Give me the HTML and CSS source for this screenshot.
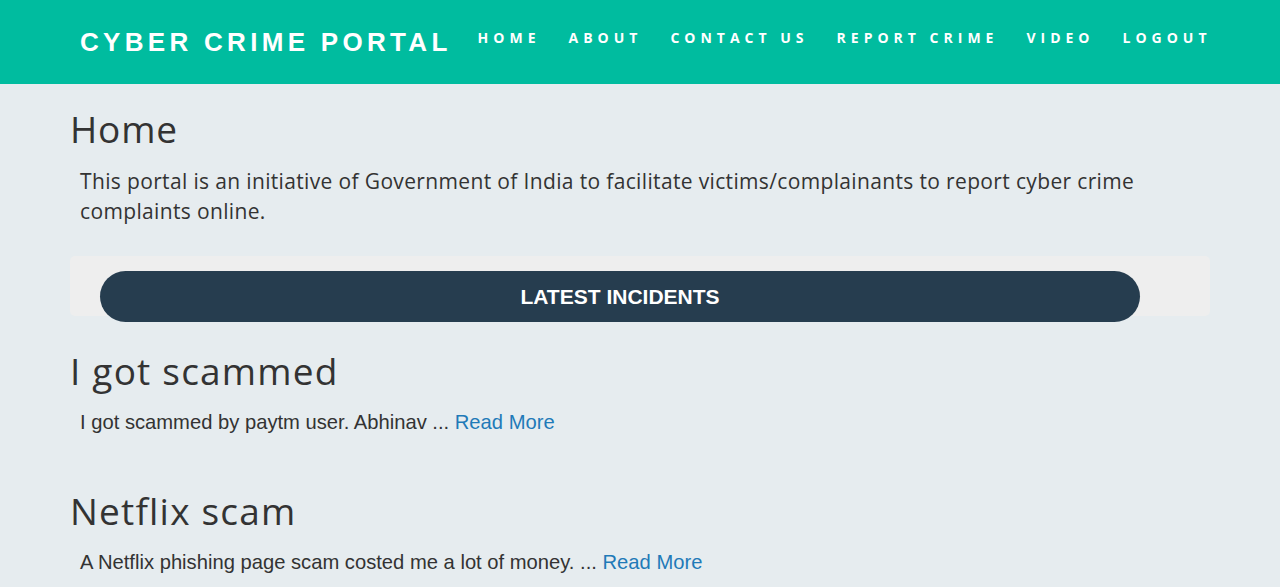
FILE: index.html
```html
<!DOCTYPE html>
<html>
<head>
<meta charset="utf-8">
<link rel="stylesheet" href="styles.css">
</head>
<body>
<header class="navbar">
  <div class="brand">CYBER CRIME PORTAL</div>
  <nav class="menu">
    <a href="#">HOME</a>
    <a href="#">ABOUT</a>
    <a href="#">CONTACT US</a>
    <a href="#">REPORT CRIME</a>
    <a href="#">VIDEO</a>
    <a href="#">LOGOUT</a>
  </nav>
</header>
<main class="container">
  <h1 class="title">Home</h1>
  <p class="intro">This portal is an initiative of Government of India to facilitate victims/complainants to report cyber crime complaints online.</p>
  <div class="well">
    <div class="pill">LATEST INCIDENTS</div>
  </div>
  <article class="incident">
    <h2 class="incident-title">I got scammed</h2>
    <p class="incident-text">I got scammed by paytm user. Abhinav ... <a href="#">Read More</a></p>
  </article>
  <article class="incident">
    <h2 class="incident-title">Netflix scam</h2>
    <p class="incident-text">A Netflix phishing page scam costed me a lot of money. ... <a href="#">Read More</a></p>
  </article>
</main>
</body>
</html>
```
FILE: styles.css
```css
html, body {
  margin: 0;
  padding: 0;
}
body {
  background: #e6ecef;
  color: #333333;
  font-family: "Liberation Sans", Arial, sans-serif;
  height: 587px;
  overflow: hidden;
}
.navbar {
  background: #00bc9f;
  height: 84px;
  display: flex;
  align-items: center;
  padding: 0 0 0 80px;
}
.brand {
  color: #ffffff;
  font-family: "Liberation Sans", Arial, sans-serif;
  font-weight: bold;
  font-size: 26px;
  letter-spacing: 4.3px;
}
.menu {
  display: flex;
  margin-left: 26px;
  gap: 28px;
  margin-top: -9px;
}
.menu a {
  color: #ffffff;
  text-decoration: none;
  font-family: "Open Sans", sans-serif;
  font-weight: 700;
  font-size: 14px;
  letter-spacing: 5px;
}
.container {
  width: 1140px;
  margin: 0 auto;
  padding: 0;
}
.title {
  font-family: "Open Sans", sans-serif;
  font-weight: 400;
  font-size: 37px;
  letter-spacing: 0.8px;
  margin: 20px 0 0 0;
  line-height: 50px;
}
.intro {
  font-family: "Open Sans", sans-serif;
  font-size: 21px;
  letter-spacing: 0.35px;
  line-height: 30px;
  margin: 12px 0 0 0;
  padding: 0 10px;
}
.well {
  background: #eeeeee;
  border-radius: 5px;
  height: 60px;
  margin-top: 30px;
  padding: 15px 70px 0 30px;
  box-sizing: border-box;
}
.pill {
  background: #263d4f;
  color: #ffffff;
  border-radius: 26px;
  height: 51px;
  display: flex;
  align-items: center;
  justify-content: center;
  font-weight: bold;
  font-size: 21px;
}
.incident-title {
  font-family: "Open Sans", sans-serif;
  font-weight: 400;
  font-size: 37px;
  letter-spacing: 1.2px;
  line-height: 50px;
  margin: 30px 0 0 0;
}
.incident-text {
  font-size: 20.2px;
  line-height: 30px;
  margin: 11px 0 0 0;
  padding: 0 10px;
}
.incident + .incident .incident-title {
  margin-top: 49px;
}
.incident-text a {
  color: #1f7ab8;
  text-decoration: none;
}
```
